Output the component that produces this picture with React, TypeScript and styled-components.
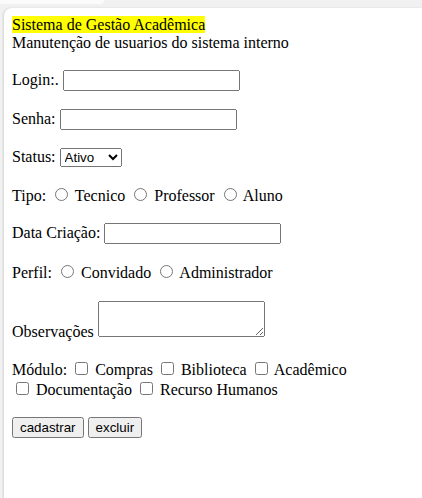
import React from "react";
import styled, { createGlobalStyle } from "styled-components";

const GlobalStyle = createGlobalStyle`
  html, body {
    margin: 0;
    padding: 0;
    background: #f1f1f1;
  }
`;

const Window = styled.div`
  display: flex;
  flex-direction: column;
  min-height: 100vh;
  background: #f1f1f1;
`;

const ChromeStrip = styled.div`
  height: 8px;
  display: flex;
  align-items: flex-start;
`;

const ChromeTab = styled.div`
  width: 104px;
  height: 4px;
  background: #fbfbfb;
  border-bottom-right-radius: 6px;
`;

const Page = styled.main`
  flex: 1;
  margin-left: 4px;
  padding: 8px;
  background: #fff;
  border-top-left-radius: 8px;
  box-shadow: -1px 0 2px rgba(0, 0, 0, 0.12);
  font-family: "Liberation Serif", "Times New Roman", serif;
  font-size: 16px;
  color: #000;
`;

const Header = styled.div`
  margin-bottom: 18px;
`;

const Title = styled.span`
  background: #ffff00;
`;

const Subtitle = styled.div``;

const Row = styled.div`
  margin-bottom: 18px;
`;

const Option = styled.span`
  white-space: nowrap;
`;

const control = `
  font-family: "Liberation Sans", Arial, sans-serif;
  font-size: 13.333px;
`;

const TextInput = styled.input`
  ${control}
  width: 169px;
`;

const Select = styled.select`
  ${control}
`;

const Notes = styled.textarea`
  font-family: "Liberation Mono", "Courier New", monospace;
  font-size: 13.333px;
  box-sizing: border-box;
  width: 167px;
  height: 36px;
  margin-top: 1px;
`;

const Choice = styled.input``;

const Button = styled.button`
  ${control}
`;

const ChoiceGroup = ({
  type,
  name,
  label,
  options,
}: {
  type: "radio" | "checkbox";
  name: string;
  label: string;
  options: string[];
}) => (
  <Row>
    {label}{" "}
    {options.map((o, i) => (
      <React.Fragment key={o}>
        <Option>
          <Choice type={type} name={name} value={o} /> {o}
        </Option>
        {i < options.length - 1 ? " " : ""}
      </React.Fragment>
    ))}
  </Row>
);

export default function App() {
  return (
    <>
      <GlobalStyle />
      <Window>
        <ChromeStrip>
          <ChromeTab />
        </ChromeStrip>
        <Page>
          <Header>
            <div>
              <Title>Sistema de Gestão Acadêmica</Title>
            </div>
            <Subtitle>Manutenção de usuarios do sistema interno</Subtitle>
          </Header>
          <Row>
            Login:. <TextInput type="text" />
          </Row>
          <Row>
            Senha: <TextInput type="password" />
          </Row>
          <Row>
            Status:{" "}
            <Select defaultValue="Ativo">
              <option>Ativo</option>
              <option>Inativo</option>
            </Select>
          </Row>
          <ChoiceGroup type="radio" name="tipo" label="Tipo:" options={["Tecnico", "Professor", "Aluno"]} />
          <Row>
            Data Criação: <TextInput type="text" />
          </Row>
          <ChoiceGroup type="radio" name="perfil" label="Perfil:" options={["Convidado", "Administrador"]} />
          <Row>
            Observações <Notes />
          </Row>
          <ChoiceGroup
            type="checkbox"
            name="modulo"
            label="Módulo:"
            options={["Compras", "Biblioteca", "Acadêmico", "Documentação", "Recurso Humanos"]}
          />
          <Row>
            <Button type="button">cadastrar</Button> <Button type="button">excluir</Button>
          </Row>
        </Page>
      </Window>
    </>
  );
}
